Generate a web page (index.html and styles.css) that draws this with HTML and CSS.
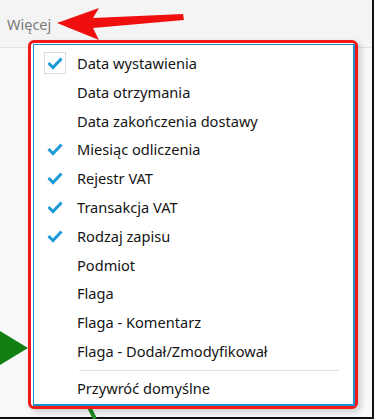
FILE: index.html
```html
<!DOCTYPE html>
<html lang="pl">
<head>
<meta charset="utf-8">
<link rel="stylesheet" href="styles.css">
</head>
<body>
<div class="frame">
  <div class="toolbar">
    <span class="more">Więcej</span>
  </div>
  <div class="content">
    <svg class="green-tri" width="30" height="34" viewBox="0 0 30 34"><polygon points="0,0 28,17 0,34" fill="#117f11"/></svg>
    <svg class="green-line" width="14" height="14" viewBox="0 0 14 14"><line x1="2" y1="0" x2="9" y2="14" stroke="#1f8a1f" stroke-width="4"/></svg>
  </div>

  <svg class="arrow" width="130" height="40" viewBox="0 0 130 40">
    <polygon points="0,17 42,2 36,12 126,8 127,14 36,22 42,34" fill="#f00f0f"/>
  </svg>

  <div class="annot">
    <div class="menu">
      <div class="item checked focus"><span class="chk"><svg width="16" height="13" viewBox="0 0 16 13"><path d="M1.5 6 L6 10.5 L14.5 1.5" fill="none" stroke="#1a9ad6" stroke-width="3"/></svg></span>Data wystawienia</div>
      <div class="item">Data otrzymania</div>
      <div class="item">Data zakończenia dostawy</div>
      <div class="item checked"><span class="chk"><svg width="16" height="13" viewBox="0 0 16 13"><path d="M1.5 6 L6 10.5 L14.5 1.5" fill="none" stroke="#1a9ad6" stroke-width="3"/></svg></span>Miesiąc odliczenia</div>
      <div class="item checked"><span class="chk"><svg width="16" height="13" viewBox="0 0 16 13"><path d="M1.5 6 L6 10.5 L14.5 1.5" fill="none" stroke="#1a9ad6" stroke-width="3"/></svg></span>Rejestr VAT</div>
      <div class="item checked"><span class="chk"><svg width="16" height="13" viewBox="0 0 16 13"><path d="M1.5 6 L6 10.5 L14.5 1.5" fill="none" stroke="#1a9ad6" stroke-width="3"/></svg></span>Transakcja VAT</div>
      <div class="item checked"><span class="chk"><svg width="16" height="13" viewBox="0 0 16 13"><path d="M1.5 6 L6 10.5 L14.5 1.5" fill="none" stroke="#1a9ad6" stroke-width="3"/></svg></span>Rodzaj zapisu</div>
      <div class="item">Podmiot</div>
      <div class="item">Flaga</div>
      <div class="item">Flaga - Komentarz</div>
      <div class="item">Flaga - Dodał/Zmodyfikował</div>
      <div class="sep"></div>
      <div class="item">Przywróć domyślne</div>
    </div>
  </div>
</div>
</body>
</html>
```

FILE: styles.css
```css
* { box-sizing: border-box; }
html, body { margin: 0; padding: 0; }
body {
  width: 374px;
  height: 419px;
  overflow: hidden;
  font-family: "Noto Sans", "Open Sans", sans-serif;
}
.frame {
  position: relative;
  width: 374px;
  height: 419px;
  border-right: 2px solid #111;
  border-bottom: 2px solid #111;
  background: #f9f9f9;
  display: flex;
  flex-direction: column;
}
.toolbar {
  height: 48px;
  background: #f4f4f4;
  border-bottom: 1px solid #e2e2e2;
  display: flex;
  align-items: center;
  padding-left: 7px;
}
.more {
  color: #7a7a7a;
  font-size: 14.5px;
}
.content {
  flex: 1;
  position: relative;
}
.green-tri {
  position: absolute;
  left: 0;
  top: 283px;
}
.green-line {
  position: absolute;
  left: 86px;
  top: 357px;
}
.arrow {
  position: absolute;
  left: 57px;
  top: 6px;
}
.annot {
  position: absolute;
  left: 28px;
  top: 40px;
  width: 330px;
  height: 369px;
  border: 3px solid #f01818;
  border-radius: 6px;
  background: #fff;
  padding: 1px 0 0 2px;
  box-shadow: 3px 3px 6px rgba(0,0,0,0.18);
}
.menu {
  width: 100%;
  height: 100%;
  border: 1px solid #1b8fcf;
  border-right-width: 2px;
  border-bottom-width: 2px;
  background: #fff;
  padding: 4px 0 0 43px;
  position: relative;
}
.item {
  position: relative;
  height: 28.8px;
  line-height: 28.8px;
  font-size: 14.6px;
  color: #151515;
  white-space: nowrap;
}
.chk {
  position: absolute;
  left: -30px;
  top: 8px;
  width: 16px;
  height: 13px;
  display: flex;
}
.focus .chk::before {
  content: "";
  position: absolute;
  left: -3px;
  top: -5px;
  width: 20px;
  height: 20px;
  border: 1px solid #dcdcdc;
}
.sep {
  height: 1px;
  background: #e0e0e0;
  margin: 4px 14px 3px 2px;
}
```
